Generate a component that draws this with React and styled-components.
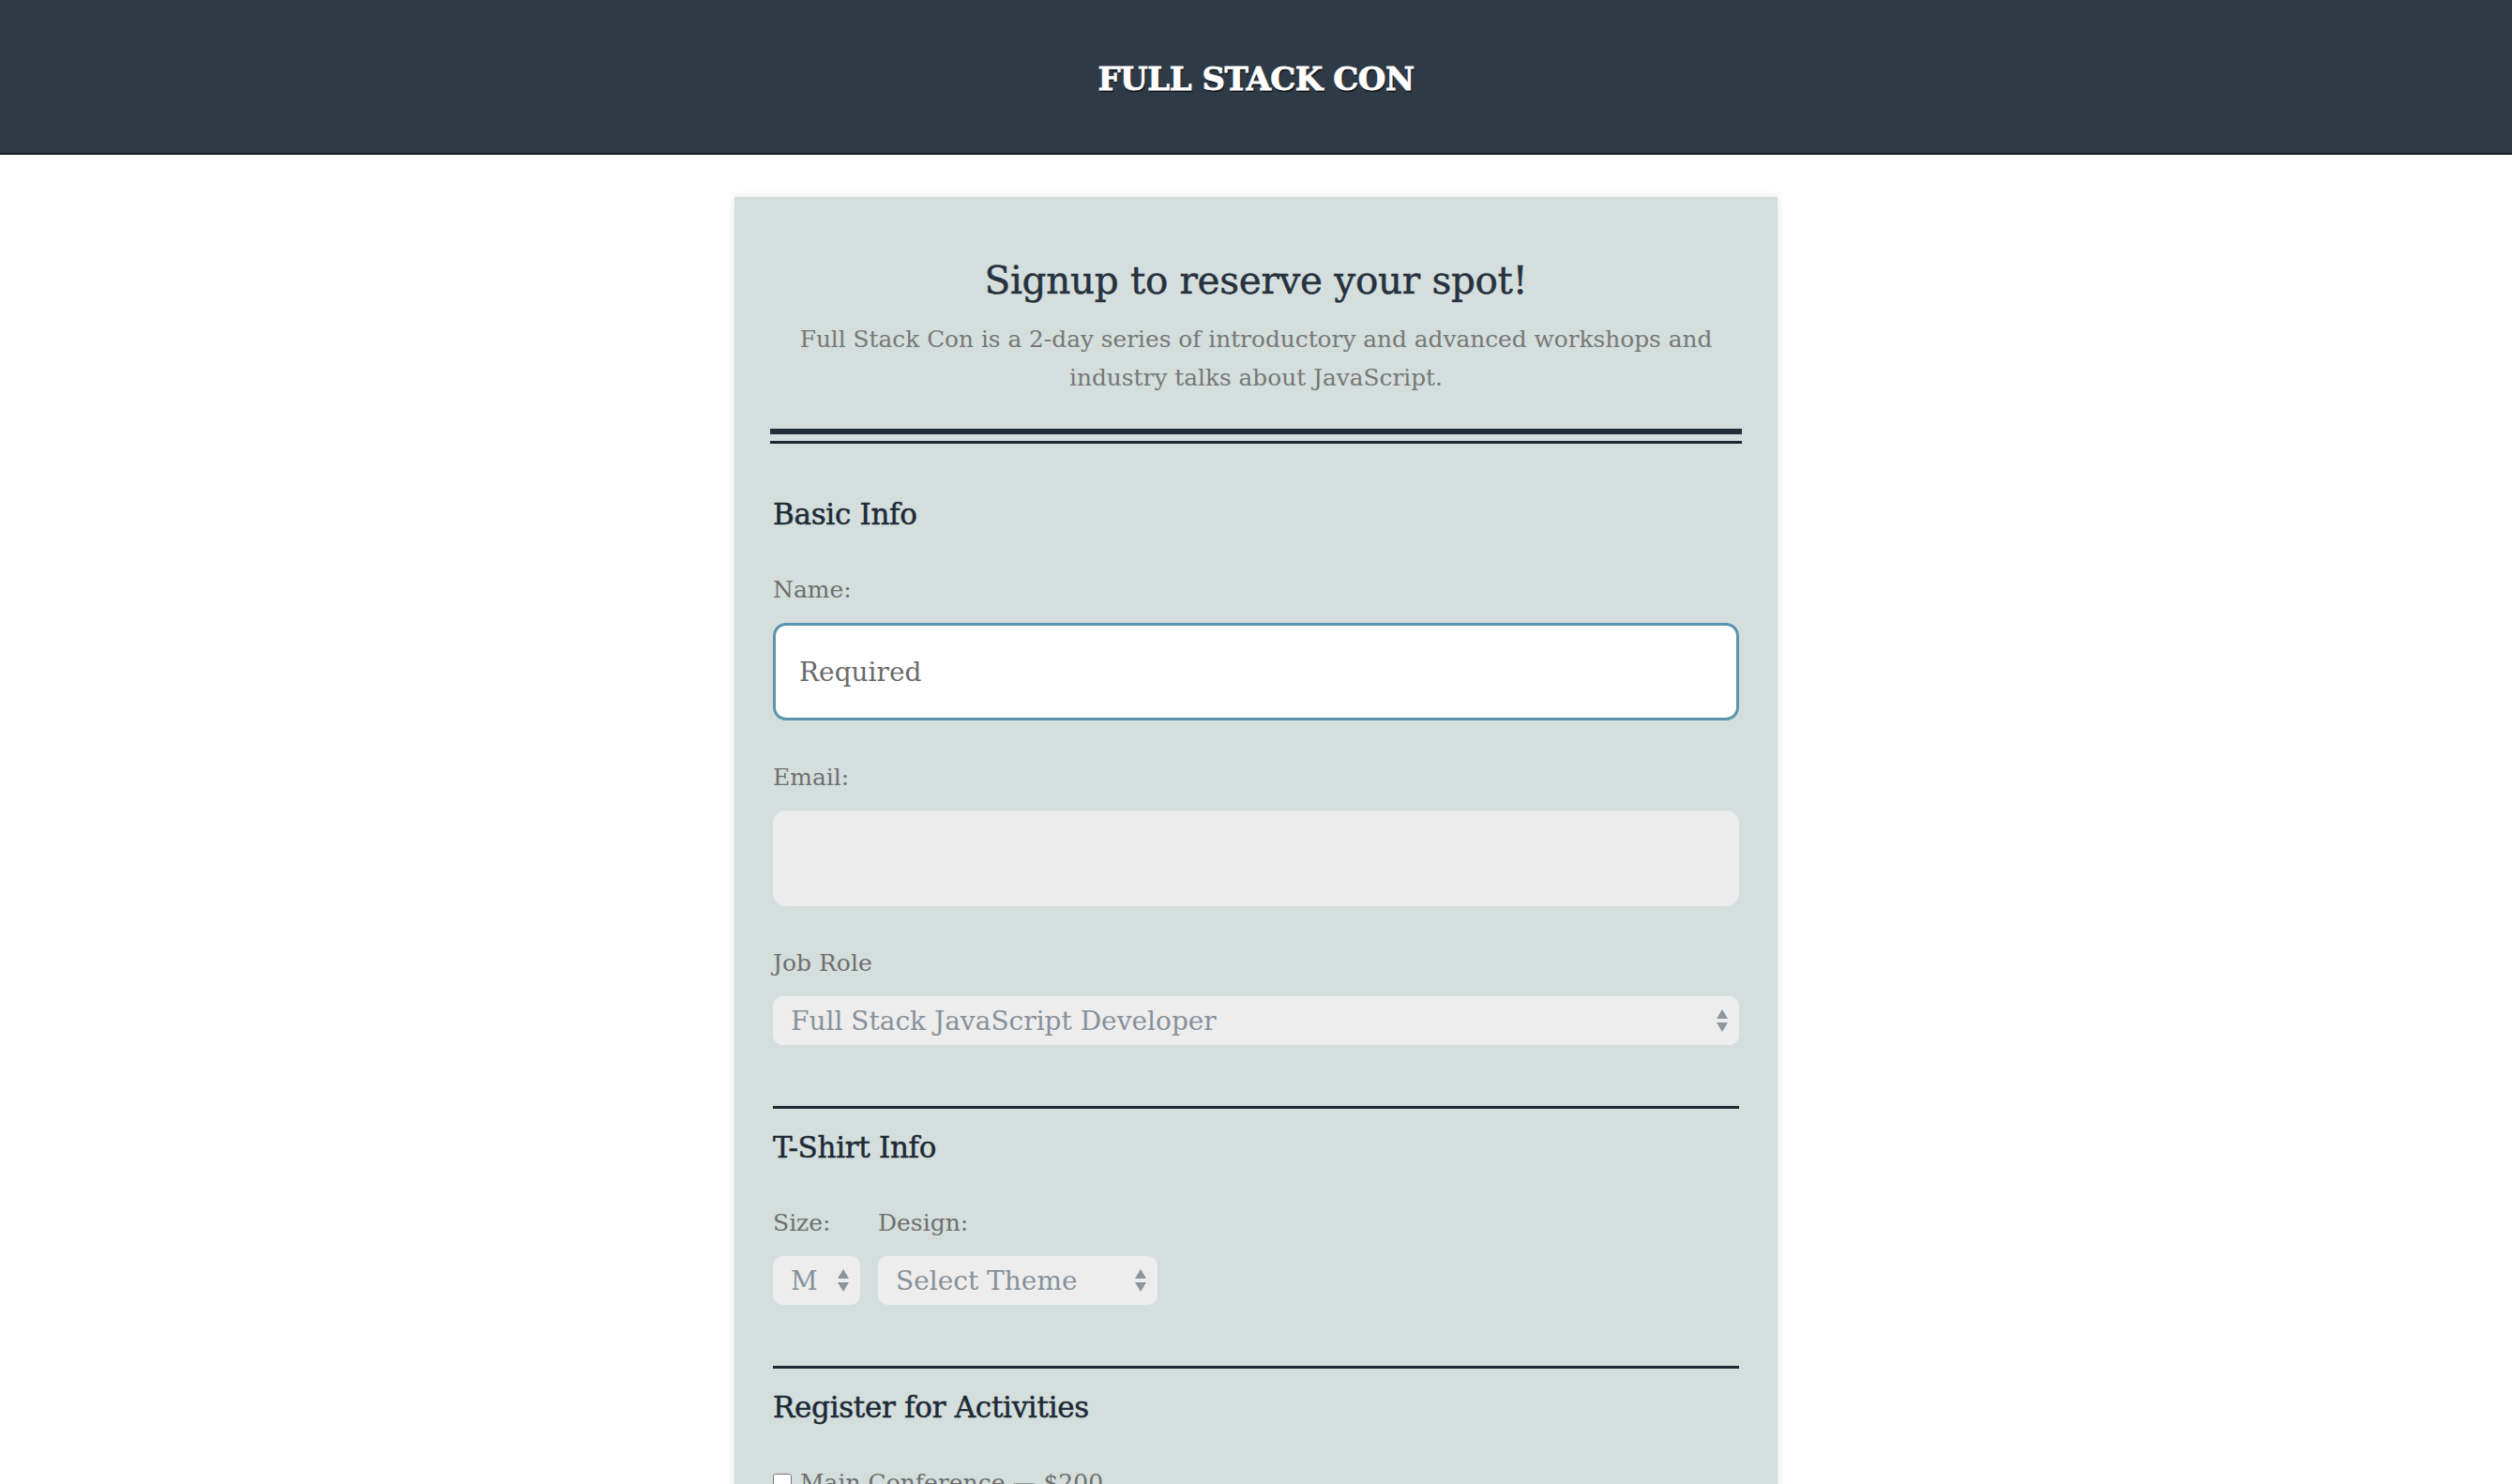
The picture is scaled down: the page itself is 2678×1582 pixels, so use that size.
import React from 'react'
import styled, { createGlobalStyle } from 'styled-components'

const GlobalStyle = createGlobalStyle`
  html, body {
    margin: 0;
    padding: 0;
    background: #fff;
  }
  body {
    font-family: "DejaVu Serif", "Liberation Serif", serif;
  }
  * {
    box-sizing: border-box;
  }
`

const Header = styled.header`
  height: 165px;
  background: #2e3a46;
  border-bottom: 2px solid #161d24;
  display: flex;
  align-items: center;
  justify-content: center;
  padding-top: 5px;

  & h1 {
    margin: 0;
    font-size: 34px;
    font-weight: bold;
    color: #fff;
    letter-spacing: -0.5px;
    -webkit-text-stroke: 0.8px #fff;
    text-shadow: 1px 2px 1px rgba(0, 0, 0, 0.75);
  }
`

const Container = styled.div`
  width: 1112px;
  margin: 45px auto 0;
  padding: 59px 41px 80px;
  background: #d4dedd;
  box-shadow: 0 0 8px rgba(0, 0, 0, 0.12);
`

const Intro = styled.div`
  text-align: center;

  & h2 {
    margin: 0;
    font-size: 40.5px;
    font-weight: normal;
    line-height: 60px;
    color: #26323d;
    letter-spacing: -0.3px;
    -webkit-text-stroke: 0.5px #26323d;
    text-shadow: 0 1px 1px rgba(255, 255, 255, 0.6);
  }

  & p {
    margin: 12px 0 0;
    font-size: 24.8px;
    line-height: 41px;
    color: #777;
  }
`

const DoubleRule = styled.div`
  margin: 34px -3px 0;
  height: 16px;
  border-top: 6px solid #222e3a;
  border-bottom: 3px solid #1b2733;
`

const Section = styled.fieldset`
  margin: 0;
  padding: ${p => (p.$first ? '55px' : '21px')} 0 22px;
  border: 0;
  border-top: ${p => (p.$first ? '0' : '3px solid #1c2833')};
  min-width: 0;
`

const Legend = styled.h3`
  margin: 0 0 43px;
  font-size: 31px;
  font-weight: normal;
  line-height: 40px;
  color: #1c2a36;
  letter-spacing: -0.3px;
  -webkit-text-stroke: 0.5px #1c2a36;
`

const Field = styled.div`
  margin-bottom: 43px;
`

const Label = styled.label`
  display: block;
  margin-bottom: 17px;
  font-size: 25px;
  line-height: 36px;
  color: #6f6f6f;
`

const TextInput = styled.input`
  display: block;
  width: 100%;
  height: ${p => (p.$focused ? '104px' : '102px')};
  padding: 0 25px;
  font-family: inherit;
  font-size: 28px;
  color: #555;
  background: ${p => (p.$focused ? '#fff' : '#ececec')};
  border: ${p => (p.$focused ? '3px solid #5b93ad' : '0')};
  border-radius: 14px;
  outline: none;

  &::placeholder {
    color: #6a6a6a;
  }
`

const SelectWrap = styled.div`
  position: relative;
  width: ${p => p.$width || '100%'};
`

const Select = styled.select`
  display: block;
  width: 100%;
  height: 52px;
  padding: 0 40px 0 19px;
  font-family: inherit;
  font-size: 28px;
  color: #86919b;
  background: #ededed;
  border: 0;
  border-radius: 10px;
  appearance: none;
  -webkit-appearance: none;
  outline: none;
`

const Arrows = styled.svg`
  position: absolute;
  right: 11px;
  top: 50%;
  width: 14px;
  height: 26px;
  margin-top: -13px;
  pointer-events: none;
`

const Row = styled.div`
  display: flex;
  gap: 19px;
`

const CheckRow = styled.label`
  display: flex;
  align-items: center;
  gap: 9px;
  margin-bottom: 20px;
  font-size: 25px;
  line-height: 36px;
  color: #6f6f6f;

  & input {
    margin: 0;
    width: 20px;
    height: 20px;
  }
`

function SelectBox({ width, children, defaultValue }) {
  return (
    <SelectWrap $width={width}>
      <Select defaultValue={defaultValue}>{children}</Select>
      <Arrows viewBox="0 0 14 26">
        <path d="M7 1 L13 11 L1 11 Z" fill="#8a96a0" />
        <path d="M1 15 L13 15 L7 25 Z" fill="#8a96a0" />
      </Arrows>
    </SelectWrap>
  )
}

const activities = [
  'Main Conference — $200',
  'JavaScript Frameworks Workshop — Tuesday 9am-12pm, $100',
  'JavaScript Libraries Workshop — Tuesday 1pm-4pm, $100',
  'Express Workshop — Tuesday 9am-12pm, $100',
  'Node.js Workshop — Tuesday 1pm-4pm, $100'
]

export default function App() {
  return (
    <>
      <GlobalStyle />
      <Header>
        <h1>FULL STACK CON</h1>
      </Header>
      <Container>
        <Intro>
          <h2>Signup to reserve your spot!</h2>
          <p>
            Full Stack Con is a 2-day series of introductory and advanced workshops and
            <br />
            industry talks about JavaScript.
          </p>
        </Intro>
        <DoubleRule />
        <form onSubmit={e => e.preventDefault()}>
          <Section $first>
            <Legend>Basic Info</Legend>
            <Field>
              <Label htmlFor="name">Name:</Label>
              <TextInput id="name" type="text" placeholder="Required" $focused />
            </Field>
            <Field>
              <Label htmlFor="mail">Email:</Label>
              <TextInput id="mail" type="email" />
            </Field>
            <Field>
              <Label htmlFor="title">Job Role</Label>
              <SelectBox defaultValue="full-stack">
                <option value="full-stack">Full Stack JavaScript Developer</option>
                <option value="front-end">Front End Developer</option>
                <option value="back-end">Back End Developer</option>
                <option value="designer">Designer</option>
                <option value="student">Student</option>
                <option value="other">Other</option>
              </SelectBox>
            </Field>
          </Section>

          <Section>
            <Legend>T-Shirt Info</Legend>
            <Field>
              <Row>
                <div>
                  <Label htmlFor="size">Size:</Label>
                  <SelectBox width="93px" defaultValue="medium">
                    <option value="small">S</option>
                    <option value="medium">M</option>
                    <option value="large">L</option>
                    <option value="extra large">XL</option>
                  </SelectBox>
                </div>
                <div>
                  <Label htmlFor="design">Design:</Label>
                  <SelectBox width="298px" defaultValue="">
                    <option value="">Select Theme</option>
                    <option value="js puns">Theme - JS Puns</option>
                    <option value="heart js">Theme - I ♥ JS</option>
                  </SelectBox>
                </div>
              </Row>
            </Field>
          </Section>

          <Section>
            <Legend>Register for Activities</Legend>
            {activities.map(a => (
              <CheckRow key={a}>
                <input type="checkbox" />
                {a}
              </CheckRow>
            ))}
          </Section>
        </form>
      </Container>
    </>
  )
}
